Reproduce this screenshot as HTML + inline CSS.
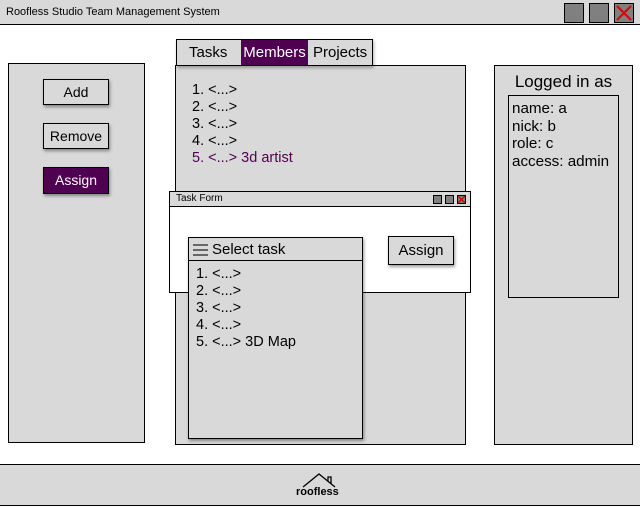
<!DOCTYPE html><html><head><style>
*{box-sizing:border-box;margin:0;padding:0}
body{width:640px;height:507px;background:#fff;position:relative;font-family:"Liberation Sans",sans-serif;overflow:hidden;color:#000}
.a{position:absolute}
.g{background:#d9d9d9;border:1px solid #000}
.btn{position:absolute;background:#d9d9d9;border:1px solid #000;box-shadow:1px 2px 3px rgba(0,0,0,.4);font-size:14px;text-align:center}
.list{position:absolute;font-size:14.5px;line-height:17px}
</style></head><body>
<div class="a" style="left:0;top:0;width:640px;height:25px;background:#d9d9d9;border-bottom:1px solid #000"></div>
<div class="a" style="left:6px;top:6px;font-size:11px">Roofless Studio Team Management System</div>
<div class="a" style="left:564px;top:3px;width:20px;height:20px;background:#808080;border:1px solid #000"></div>
<div class="a" style="left:589px;top:3px;width:20px;height:20px;background:#808080;border:1px solid #000"></div>
<div class="a" style="left:614px;top:3px;width:20px;height:20px;background:#808080;border:1px solid #000"><svg width="18" height="18" style="position:absolute;left:0;top:0"><path d="M2 2L16 16M16 2L2 16" stroke="#d00" stroke-width="2"/></svg></div>

<div class="a g" style="left:8px;top:63px;width:137px;height:380px"></div>
<div class="btn" style="left:43px;top:79px;width:66px;height:26px;line-height:24px">Add</div>
<div class="btn" style="left:43px;top:123px;width:66px;height:26px;line-height:24px">Remove</div>
<div class="btn" style="left:43px;top:167px;width:66px;height:27px;line-height:25px;background:#500050;color:#fff">Assign</div>

<div class="a g" style="left:175px;top:65px;width:291px;height:380px"></div>
<div class="a" style="left:176px;top:39px;width:197px;height:27px;border:1px solid #000;background:#d9d9d9;box-shadow:1px 2px 3px rgba(0,0,0,.3);font-size:15px;line-height:25px">
<span class="a" style="left:12px">Tasks</span>
<span class="a" style="left:64px;width:67px;height:25px;background:#500050;color:#fff;text-align:center">Members</span>
<span class="a" style="left:136px">Projects</span></div>
<div class="list" style="left:192px;top:82px">1. &lt;...&gt;<br>2. &lt;...&gt;<br>3. &lt;...&gt;<br>4. &lt;...&gt;<br><span style="color:#500050">5. &lt;...&gt; 3d artist</span></div>

<div class="a" style="left:169px;top:191px;width:302px;height:102px;background:#fff;border:1px solid #000"></div>
<div class="a" style="left:169px;top:191px;width:302px;height:16px;background:#d9d9d9;border:1px solid #000;font-size:10px;line-height:14px;padding-left:6px">Task Form</div>
<div class="a" style="left:433px;top:195px;width:9px;height:9px;background:#808080;border:1px solid #000"></div>
<div class="a" style="left:445px;top:195px;width:9px;height:9px;background:#808080;border:1px solid #000"></div>
<div class="a" style="left:457px;top:195px;width:9px;height:9px;background:#808080;border:1px solid #000"><svg width="7" height="7" style="position:absolute;left:0;top:0"><path d="M0 0L7 7M7 0L0 7" stroke="#d00" stroke-width="1.5"/></svg></div>
<div class="btn" style="left:388px;top:236px;width:66px;height:29px;line-height:27px;font-size:15px">Assign</div>

<div class="a g" style="left:188px;top:237px;width:175px;height:202px;box-shadow:1px 2px 3px rgba(0,0,0,.4)"></div>
<div class="a" style="left:188px;top:237px;width:175px;height:24px;border:1px solid #000;font-size:15px;line-height:24px;padding-left:23px">Select task</div>
<svg class="a" style="left:193px;top:243px" width="16" height="14"><path d="M0 2H15M0 7H15M0 12H15" stroke="#666" stroke-width="2"/></svg>
<div class="list" style="left:196px;top:266px">1. &lt;...&gt;<br>2. &lt;...&gt;<br>3. &lt;...&gt;<br>4. &lt;...&gt;<br>5. &lt;...&gt; 3D Map</div>

<div class="a g" style="left:494px;top:65px;width:139px;height:380px"></div>
<div class="a" style="left:494px;top:72px;width:139px;text-align:center;font-size:17px">Logged in as</div>
<div class="a" style="left:508px;top:95px;width:111px;height:203px;border:1px solid #000"></div>
<div class="list" style="left:512px;top:100px;font-size:15.2px;line-height:17.5px">name: a<br>nick: b<br>role: c<br>access: admin</div>

<div class="a" style="left:0;top:464px;width:640px;height:42px;background:#d9d9d9;border-top:1px solid #000;border-bottom:1px solid #000"></div>
<svg class="a" style="left:300px;top:472px" width="40" height="16"><path d="M3 15L19 2L35 15M28 9V5H31V12" stroke="#000" stroke-width="1.3" fill="none"/></svg>
<div class="a" style="left:296px;top:486px;font-size:11px;font-weight:bold">roofless</div>
</body></html>
